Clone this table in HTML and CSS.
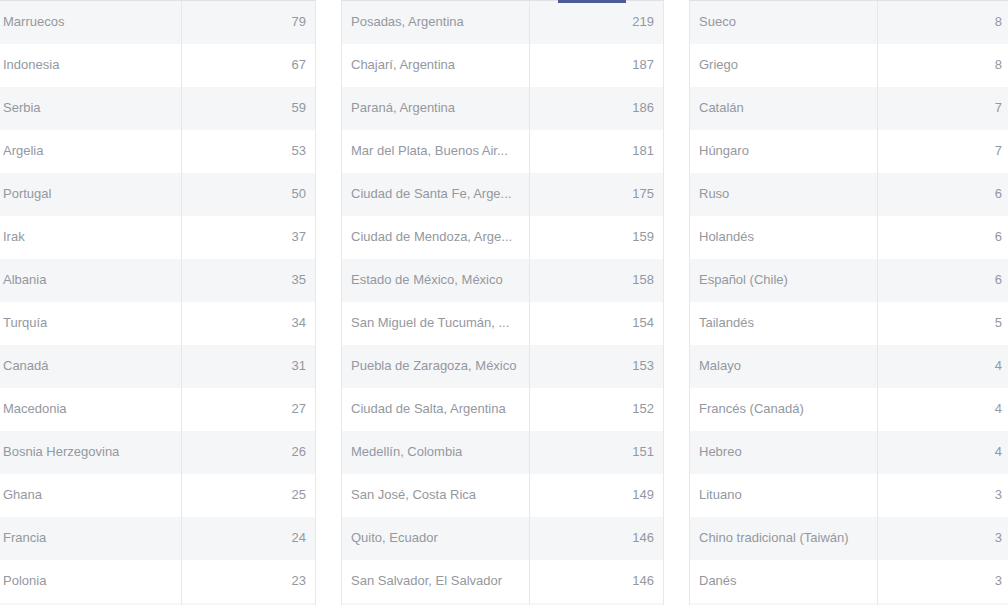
FILE: index.html
```html
<!DOCTYPE html>
<html lang="es">
<head>
<meta charset="utf-8">
<title>Tablas</title>
<link rel="stylesheet" href="styles.css">
</head>
<body>
<div class="tab-indicator"></div>
<div class="tables">
  <div class="table">
    <div class="row"><div class="name">Marruecos</div><div class="num">79</div></div>
    <div class="row"><div class="name">Indonesia</div><div class="num">67</div></div>
    <div class="row"><div class="name">Serbia</div><div class="num">59</div></div>
    <div class="row"><div class="name">Argelia</div><div class="num">53</div></div>
    <div class="row"><div class="name">Portugal</div><div class="num">50</div></div>
    <div class="row"><div class="name">Irak</div><div class="num">37</div></div>
    <div class="row"><div class="name">Albania</div><div class="num">35</div></div>
    <div class="row"><div class="name">Turquía</div><div class="num">34</div></div>
    <div class="row"><div class="name">Canadá</div><div class="num">31</div></div>
    <div class="row"><div class="name">Macedonia</div><div class="num">27</div></div>
    <div class="row"><div class="name">Bosnia Herzegovina</div><div class="num">26</div></div>
    <div class="row"><div class="name">Ghana</div><div class="num">25</div></div>
    <div class="row"><div class="name">Francia</div><div class="num">24</div></div>
    <div class="row"><div class="name">Polonia</div><div class="num">23</div></div>
    <div class="row"><div class="name"></div><div class="num"></div></div>
  </div>
  <div class="table">
    <div class="row"><div class="name">Posadas, Argentina</div><div class="num">219</div></div>
    <div class="row"><div class="name">Chajarí, Argentina</div><div class="num">187</div></div>
    <div class="row"><div class="name">Paraná, Argentina</div><div class="num">186</div></div>
    <div class="row"><div class="name">Mar del Plata, Buenos Air...</div><div class="num">181</div></div>
    <div class="row"><div class="name">Ciudad de Santa Fe, Arge...</div><div class="num">175</div></div>
    <div class="row"><div class="name">Ciudad de Mendoza, Arge...</div><div class="num">159</div></div>
    <div class="row"><div class="name">Estado de México, México</div><div class="num">158</div></div>
    <div class="row"><div class="name">San Miguel de Tucumán, ...</div><div class="num">154</div></div>
    <div class="row"><div class="name">Puebla de Zaragoza, México</div><div class="num">153</div></div>
    <div class="row"><div class="name">Ciudad de Salta, Argentina</div><div class="num">152</div></div>
    <div class="row"><div class="name">Medellín, Colombia</div><div class="num">151</div></div>
    <div class="row"><div class="name">San José, Costa Rica</div><div class="num">149</div></div>
    <div class="row"><div class="name">Quito, Ecuador</div><div class="num">146</div></div>
    <div class="row"><div class="name">San Salvador, El Salvador</div><div class="num">146</div></div>
    <div class="row"><div class="name"></div><div class="num"></div></div>
  </div>
  <div class="table">
    <div class="row"><div class="name">Sueco</div><div class="num">8</div></div>
    <div class="row"><div class="name">Griego</div><div class="num">8</div></div>
    <div class="row"><div class="name">Catalán</div><div class="num">7</div></div>
    <div class="row"><div class="name">Húngaro</div><div class="num">7</div></div>
    <div class="row"><div class="name">Ruso</div><div class="num">6</div></div>
    <div class="row"><div class="name">Holandés</div><div class="num">6</div></div>
    <div class="row"><div class="name">Español (Chile)</div><div class="num">6</div></div>
    <div class="row"><div class="name">Tailandés</div><div class="num">5</div></div>
    <div class="row"><div class="name">Malayo</div><div class="num">4</div></div>
    <div class="row"><div class="name">Francés (Canadá)</div><div class="num">4</div></div>
    <div class="row"><div class="name">Hebreo</div><div class="num">4</div></div>
    <div class="row"><div class="name">Lituano</div><div class="num">3</div></div>
    <div class="row"><div class="name">Chino tradicional (Taiwán)</div><div class="num">3</div></div>
    <div class="row"><div class="name">Danés</div><div class="num">3</div></div>
    <div class="row"><div class="name"></div><div class="num"></div></div>
  </div>
</div>
</body>
</html>
```

FILE: styles.css
```css
html, body {
  margin: 0;
  padding: 0;
  background: #ffffff;
  overflow: hidden;
}

body {
  font-family: "Liberation Sans", Arial, sans-serif;
  font-size: 13px;
  color: #94989f;
  position: relative;
  height: 605px;
}

.tab-indicator {
  position: absolute;
  top: 0;
  left: 558px;
  width: 68px;
  height: 3px;
  background: #4a5b98;
  z-index: 2;
}

.tables {
  display: flex;
  gap: 25px;
  margin-left: -7px;
}

.table {
  flex: 0 0 323px;
  width: 323px;
  box-sizing: border-box;
  border-top: 1px solid #dfe1e4;
  border-left: 1px solid #e6e8eb;
  border-right: 1px solid #e6e8eb;
}

.row {
  display: grid;
  grid-template-columns: 188px 1fr;
  height: 43px;
  background: #ffffff;
}

.row:nth-child(odd) {
  background: #f5f6f8;
}

.name,
.num {
  box-sizing: border-box;
  padding-bottom: 2px;
  min-width: 0;
  display: flex;
  align-items: center;
  white-space: nowrap;
}

.name {
  border-right: 1px solid #e6e8eb;
  padding-left: 9px;
  padding-right: 8px;
  overflow: hidden;
}

.num {
  justify-content: flex-end;
  padding-right: 9px;
}
```
